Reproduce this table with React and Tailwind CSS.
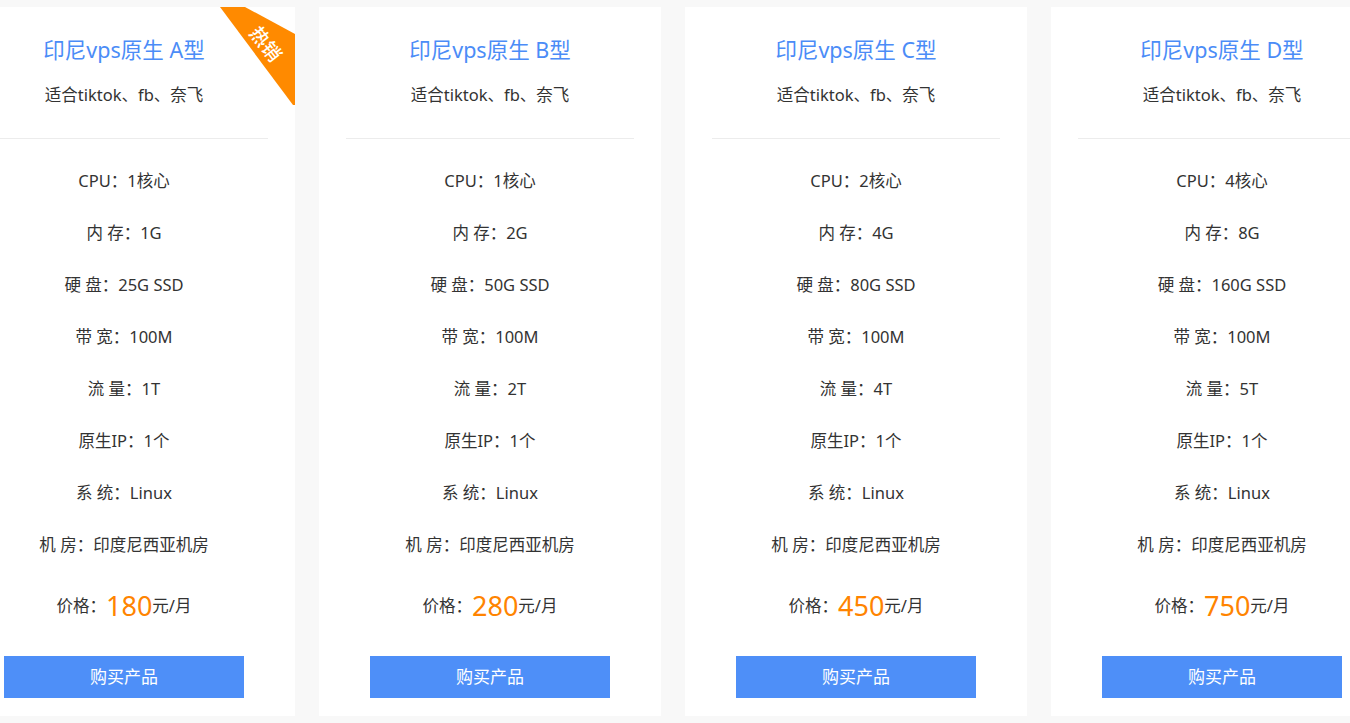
const plans = [
  { name: 'A', cpu: '1', mem: '1G', disk: '25G SSD', traffic: '1T', price: '180', hot: true },
  { name: 'B', cpu: '1', mem: '2G', disk: '50G SSD', traffic: '2T', price: '280' },
  { name: 'C', cpu: '2', mem: '4G', disk: '80G SSD', traffic: '4T', price: '450' },
  { name: 'D', cpu: '4', mem: '8G', disk: '160G SSD', traffic: '5T', price: '750' },
]

function HotRibbon() {
  return (
    <svg className="absolute top-0 right-0" width="75" height="98" viewBox="0 0 75 98">
      <polygon points="0,0 25,0 75,27 75,98 73,98" fill="#ff8a00" />
      <text
        x="0"
        y="0"
        transform="translate(47 36) rotate(52)"
        textAnchor="middle"
        dominantBaseline="central"
        fill="#ffffff"
        fontSize="19"
        fontWeight="500"
        fontFamily="'Noto Sans CJK SC', sans-serif"
      >
        热销
      </text>
    </svg>
  )
}

function PlanCard({ plan }) {
  const specs = [
    `CPU：${plan.cpu}核心`,
    `内 存：${plan.mem}`,
    `硬 盘：${plan.disk}`,
    '带 宽：100M',
    `流 量：${plan.traffic}`,
    '原生IP：1个',
    '系 统：Linux',
    '机 房：印度尼西亚机房',
  ]

  return (
    <div className="relative w-[342px] shrink-0 bg-white pt-[28px] pb-[18px] overflow-hidden">
      {plan.hot && <HotRibbon />}
      <div className="text-center text-[21.5px] leading-[30px] text-[#4b8cf7]">印尼vps原生 {plan.name}型</div>
      <div className="mt-[15px] text-center text-[16.5px] leading-[30px] text-[#333]">适合tiktok、fb、奈飞</div>
      <div className="mx-[27px] mt-[28px] h-px bg-[#ececec]"></div>
      <ul className="pt-[16px]">
        {specs.map((s, i) => (
          <li key={i} className="h-[52px] flex items-center justify-center text-[16.5px] text-[#333] whitespace-pre">
            {s}
          </li>
        ))}
      </ul>
      <div className="mt-[15px] h-[40px] flex items-center justify-center text-[16.5px] text-[#333]">
        价格：<span className="text-[27px] text-[#ff8400]">{plan.price}</span>元/月
      </div>
      <button className="mt-[30px] mx-auto block w-[240px] h-[42px] bg-[#4e8ff8] text-white text-[17px]">
        购买产品
      </button>
    </div>
  )
}

export default function App() {
  return (
    <div
      className="w-[1350px] h-[723px] bg-[#f8f8f8] overflow-hidden pt-[7px]"
      style={{ fontFamily: "'Noto Sans', 'Noto Sans CJK SC', sans-serif" }}
    >
      <div className="flex gap-6 ml-[-47px]">
        {plans.map((p) => (
          <PlanCard key={p.name} plan={p} />
        ))}
      </div>
    </div>
  )
}
